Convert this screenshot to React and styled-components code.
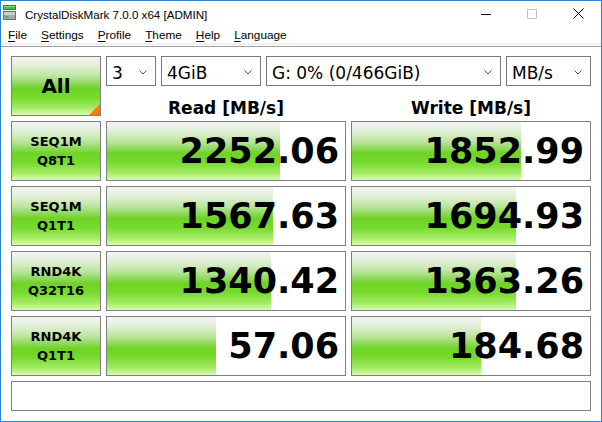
import { Fragment } from 'react';
import styled, { createGlobalStyle } from 'styled-components';

const GlobalStyle = createGlobalStyle`
  html, body {
    margin: 0;
    padding: 0;
    background: #ffffff;
  }
  * {
    box-sizing: border-box;
  }
`;

const meterGradient = `linear-gradient(to bottom,
  #f4f4f4 0%,
  #e4f0dc 14%,
  #c0e6a3 32%,
  #8fd85c 46%,
  #6fd324 54%,
  #76db2d 70%,
  #a2ea60 87%,
  #d8fbb0 100%)`;

const Window = styled.div`
  width: 602px;
  height: 422px;
  border: 1px solid #2b82d9;
  background: #ffffff;
  display: flex;
  flex-direction: column;
  font-family: "Liberation Sans", Arial, sans-serif;
  color: #000;
  overflow: hidden;
`;

const TitleBar = styled.div`
  height: 27px;
  display: flex;
  align-items: flex-start;
`;

const AppIcon = styled.svg`
  margin: 4px 0 0 2px;
  flex: none;
`;

const TitleText = styled.div`
  margin-left: 8px;
  font-size: 11.6px;
  line-height: 14px;
  padding-top: 7px;
  white-space: nowrap;
`;

const CaptionButtons = styled.div`
  margin-left: auto;
  display: flex;
`;

const CaptionButton = styled.div`
  width: 46px;
  height: 25px;
  display: flex;
  align-items: center;
  justify-content: center;
`;

const MenuBar = styled.div`
  height: 17px;
  display: flex;
  border-bottom: 2px solid #f0f0f0;
`;

const MenuItem = styled.div`
  padding: 0 7px;
  font-size: 11.8px;
  line-height: 14px;
  white-space: nowrap;

  u {
    text-underline-offset: 2px;
  }
`;

const Divider = styled.div`
  margin-top: 1px;
  height: 1px;
  background: #a0a0a0;
`;

const Panel = styled.div`
  flex: 1;
  display: grid;
  grid-template-columns: 90px 240px 240px;
  grid-template-rows: 30px 25px 60px 60px 60px 60px 30px;
  gap: 5px;
  padding: 9px 10px 10px 10px;
`;

const AllButton = styled.div`
  grid-row: 1 / span 2;
  position: relative;
  border: 1px solid #808080;
  background: ${meterGradient};
  display: flex;
  align-items: center;
  justify-content: center;
  font-family: "DejaVu Sans", sans-serif;
  font-weight: bold;
  font-size: 20px;

  &::after {
    content: '';
    position: absolute;
    right: 0;
    bottom: 0;
    width: 11px;
    height: 11px;
    background: #ff7b00;
    clip-path: polygon(100% 0, 100% 100%, 0 100%);
  }
`;

const Controls = styled.div`
  grid-column: 2 / span 2;
  display: flex;
  gap: 5px;
`;

const Select = styled.div`
  width: ${p => p.$width}px;
  border: 1px solid #7a7a7a;
  background: #fff;
  display: flex;
  align-items: center;
  padding: 3px 8px 0 5px;
  font-family: "DejaVu Sans", sans-serif;
  font-size: 17px;
  white-space: nowrap;

  span {
    flex: 1;
  }
`;

const Header = styled.div`
  display: flex;
  align-items: flex-start;
  justify-content: center;
  padding-top: 7px;
  font-family: "DejaVu Sans", sans-serif;
  font-weight: bold;
  font-size: 17px;
  white-space: nowrap;
`;

const TestButton = styled.div`
  border: 1px solid #808080;
  background: ${meterGradient};
  display: flex;
  flex-direction: column;
  align-items: center;
  justify-content: center;
  font-family: "DejaVu Sans", sans-serif;
  font-weight: bold;
  font-size: 13px;
  line-height: 19px;
`;

const Meter = styled.div`
  border: 1px solid #808080;
  background: ${meterGradient} no-repeat, #ffffff;
  display: flex;
  align-items: center;
  justify-content: flex-end;
  padding-right: 6px;
  font-family: "DejaVu Sans", sans-serif;
  font-weight: bold;
  font-size: 35px;
`;

const StatusBox = styled.div`
  grid-column: 1 / span 3;
  border: 1px solid #808080;
  background: #fff;
`;

const Chevron = () => (
  <svg width="8" height="5" viewBox="0 0 8 5">
    <path d="M0.5 0.5 L4 4 L7.5 0.5" fill="none" stroke="#555" strokeWidth="1" />
  </svg>
);

const tests = [
  { top: 'SEQ1M', bottom: 'Q8T1', read: '2252.06', readBar: 173, write: '1852.99', writeBar: 169 },
  { top: 'SEQ1M', bottom: 'Q1T1', read: '1567.63', readBar: 166, write: '1694.93', writeBar: 164 },
  { top: 'RND4K', bottom: 'Q32T16', read: '1340.42', readBar: 164, write: '1363.26', writeBar: 164 },
  { top: 'RND4K', bottom: 'Q1T1', read: '57.06', readBar: 109, write: '184.68', writeBar: 129 },
];

const menus = ['File', 'Settings', 'Profile', 'Theme', 'Help', 'Language'];

const App = () => {
  return (
    <>
      <GlobalStyle />
      <Window>
        <TitleBar>
          <AppIcon width="14" height="16" viewBox="0 0 14 16">
            <rect x="0.5" y="0.5" width="12" height="4" fill="#3fbf3f" stroke="#2a8a2a" />
            <rect x="1" y="1" width="11" height="1" fill="#8be08b" />
            <rect x="0.5" y="6.5" width="12" height="8" fill="#a8a8a8" stroke="#6e6e6e" />
            <rect x="1" y="7" width="11" height="3" fill="#d0d0d0" />
            <rect x="2" y="11" width="3" height="2" fill="#3fbf3f" />
          </AppIcon>
          <TitleText>CrystalDiskMark 7.0.0 x64 [ADMIN]</TitleText>
          <CaptionButtons>
            <CaptionButton>
              <svg width="10" height="10" viewBox="0 0 10 10">
                <path d="M0 5.5 H10" stroke="#000" strokeWidth="1" />
              </svg>
            </CaptionButton>
            <CaptionButton>
              <svg width="10" height="10" viewBox="0 0 10 10">
                <rect x="0.5" y="0.5" width="9" height="9" fill="none" stroke="#c4c4c4" />
              </svg>
            </CaptionButton>
            <CaptionButton>
              <svg width="11" height="11" viewBox="0 0 11 11">
                <path d="M0.5 0.5 L10.5 10.5 M10.5 0.5 L0.5 10.5" stroke="#000" strokeWidth="1" />
              </svg>
            </CaptionButton>
          </CaptionButtons>
        </TitleBar>

        <MenuBar>
          {menus.map(m => (
            <MenuItem key={m}>
              <u>{m[0]}</u>{m.slice(1)}
            </MenuItem>
          ))}
        </MenuBar>
        <Divider />

        <Panel>
          <AllButton>All</AllButton>
          <Controls>
            <Select $width={50}><span>3</span><Chevron /></Select>
            <Select $width={100}><span>4GiB</span><Chevron /></Select>
            <Select $width={235}><span>G: 0% (0/466GiB)</span><Chevron /></Select>
            <Select $width={85}><span>MB/s</span><Chevron /></Select>
          </Controls>
          <Header>Read [MB/s]</Header>
          <Header>Write [MB/s]</Header>

          {tests.map(t => (
            <Fragment key={t.top + t.bottom}>
              <TestButton>
                <div>{t.top}</div>
                <div>{t.bottom}</div>
              </TestButton>
              <Meter style={{ backgroundSize: `${t.readBar}px 100%, auto` }}>{t.read}</Meter>
              <Meter style={{ backgroundSize: `${t.writeBar}px 100%, auto` }}>{t.write}</Meter>
            </Fragment>
          ))}

          <StatusBox />
        </Panel>
      </Window>
    </>
  );
};

export default App;
